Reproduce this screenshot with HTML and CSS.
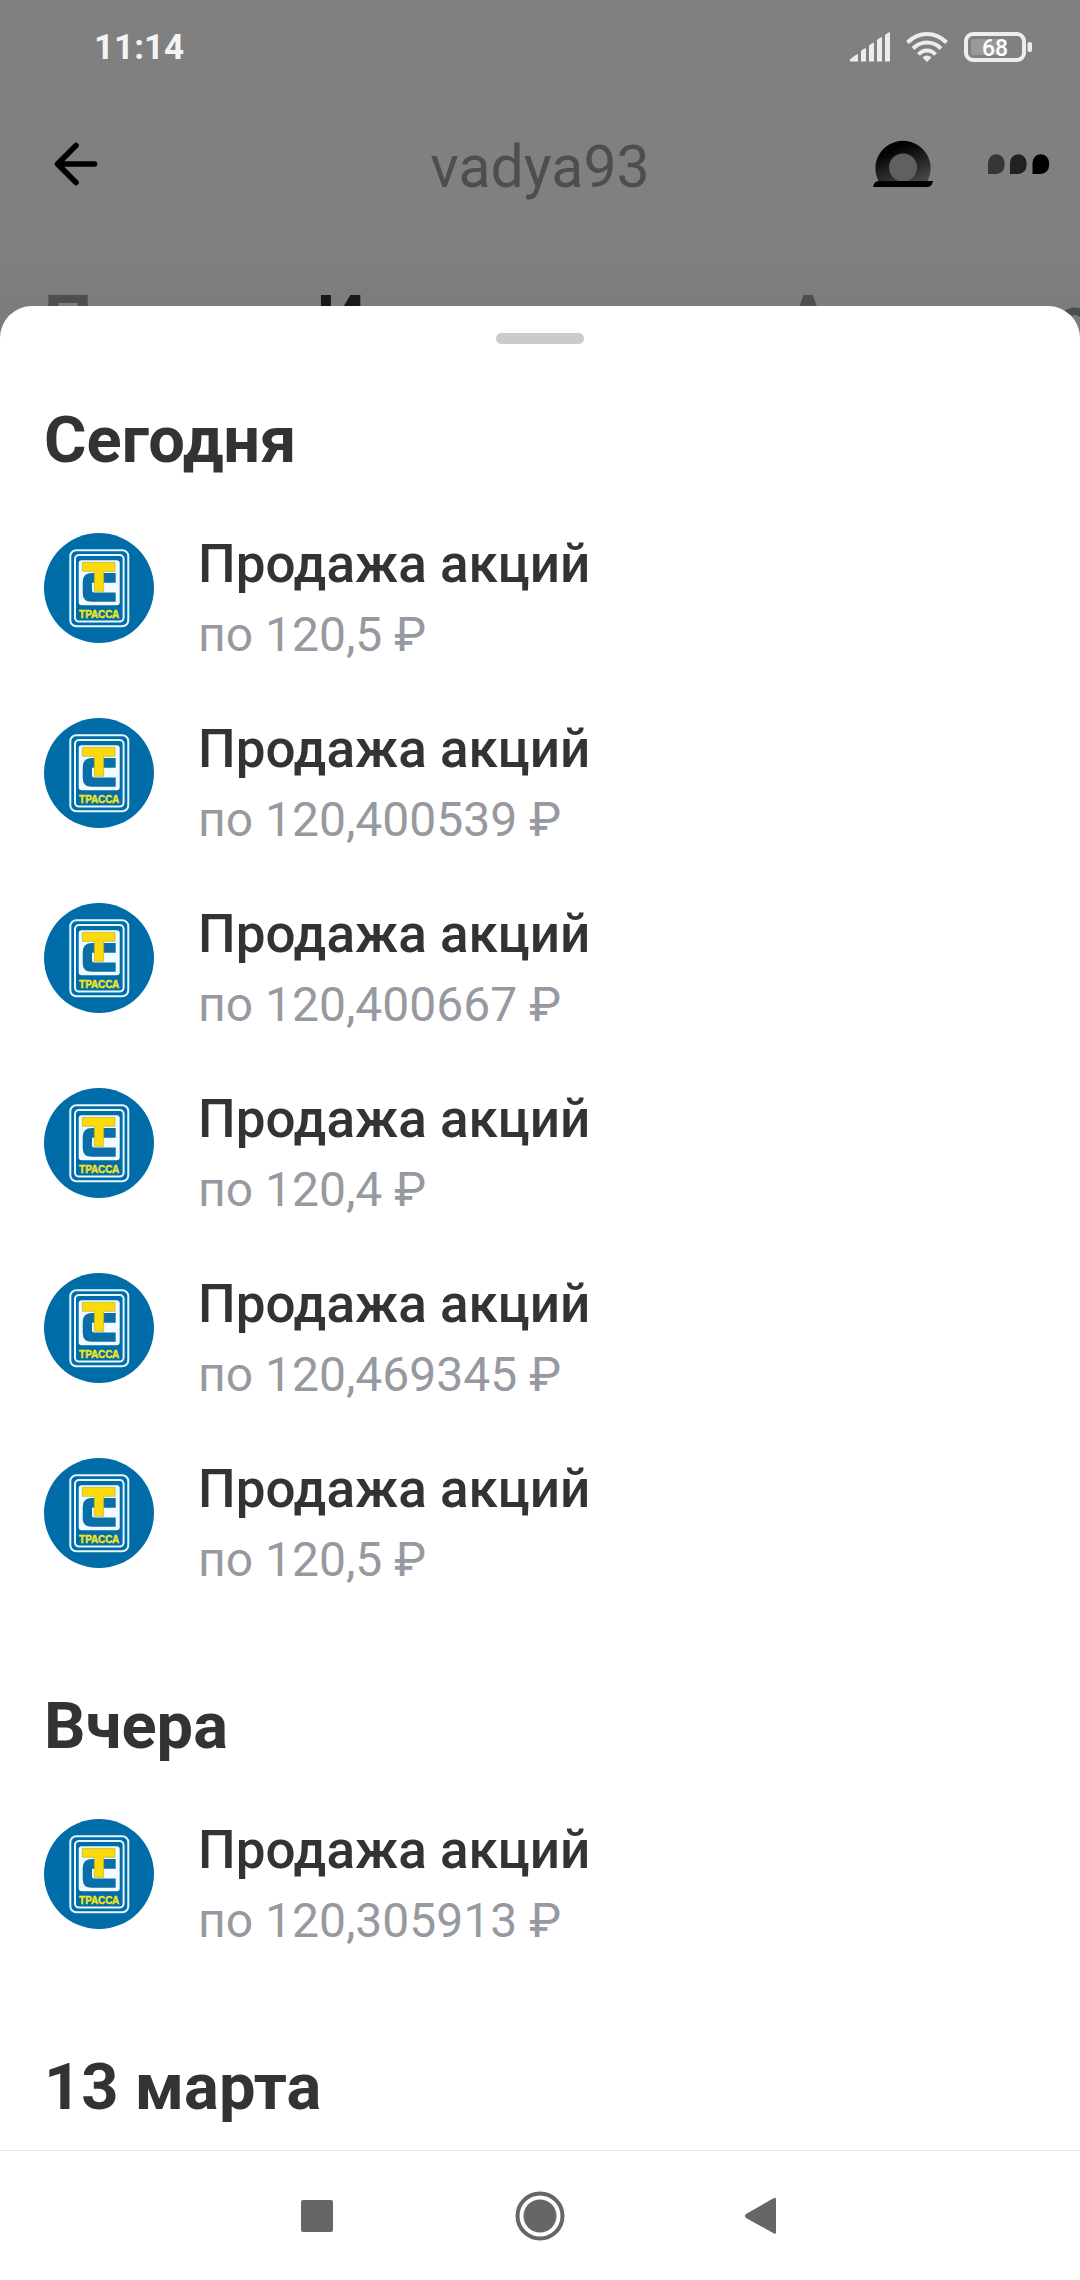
FILE: index.html
```html
<!DOCTYPE html>
<html lang="ru">
<head>
<meta charset="utf-8">
<meta name="viewport" content="width=device-width, initial-scale=1">
<title>vadya93</title>
<link rel="stylesheet" href="styles.css">
</head>
<body>
<svg class="sprite" aria-hidden="true">
  <symbol id="logo" viewBox="0 0 110 110">
    <circle cx="55" cy="55" r="55" fill="#006ca8"/>
    <rect x="26.3" y="17.3" width="58" height="76" rx="6" fill="none" stroke="#e8f7fd" stroke-width="2"/>
    <rect x="31" y="22" width="48.6" height="66.6" rx="4" fill="none" stroke="#e8f7fd" stroke-width="2"/>
    <rect x="34.7" y="27.3" width="41" height="45" rx="3" fill="#f2fbff"/>
    <path d="M71.7 40H48q-9.3 0-9.3 9v11q0 8.700 8.700 8.700h24.300v-9.200H50q-2 0-2-2v-7.800h23.700z" fill="#0a6fa8"/>
    <path d="M38.3 29.3H71v9H59.7v20h-9.400v-20h-12z" fill="#fbd90b" stroke="#a9b02a" stroke-width=".6"/>
    <text x="55.2" y="84.7" text-anchor="middle" class="logo-text">ТРАССА</text>
  </symbol>
</svg>

<div class="screen">
  <header class="top">
    <div class="status">
      <time class="clock">11:14</time>
      <div class="status-icons">
        <svg width="40" height="30" viewBox="0 0 40 30" fill="#ededed" aria-hidden="true">
          <path d="M0 29.500V27.500Q3 24 8 22v7.500zM11 29.500V19q2-2 5-3v13.500zM19 29.500V13.500q2-2 5-3v19zM27 29.500V8q2-2 5-3v24.500zM35 29.500V3q2-2 5-3v29.500z"/>
        </svg>
        <svg width="42" height="30" viewBox="0 0 42 30" fill="none" stroke="#ededed" stroke-width="4" aria-hidden="true">
          <path d="M1.500 10.500Q10 2 21 2t19.500 8.500M7 16.500Q13 10.500 21 10.500t14 6M12.500 22.500Q16 18.500 21 18.500t8.500 4"/>
          <path d="M21 30l-4.500-4.500Q21 21.500 25.500 25.500z" fill="#ededed" stroke="none"/>
        </svg>
        <svg width="68" height="30" viewBox="0 0 68 30" aria-label="68%">
          <rect x="2" y="2" width="58" height="26" rx="7" fill="none" stroke="#ededed" stroke-width="4"/>
          <rect x="7" y="7" width="33" height="16" rx="2" fill="#999"/>
          <rect x="63.500" y="10" width="4.500" height="10" rx="2" fill="#ededed"/>
          <text x="31" y="23.500" text-anchor="middle" class="battery-text">68</text>
        </svg>
      </div>
    </div>
    <div class="bar">
      <button class="icon-btn back" aria-label="Назад">
        <svg width="44" height="44" viewBox="0 0 44 44" fill="none" stroke="#000" stroke-width="5.600" stroke-linecap="round" stroke-linejoin="round"><path d="M22 3.500L3.500 22 22 40.500M4 22h36.500"/></svg>
      </button>
      <h1 class="user">vadya93</h1>
      <div class="actions">
        <button class="icon-btn" aria-label="Инкогнито">
          <svg width="60" height="48" viewBox="0 0 60 48">
            <defs><linearGradient id="hat" x1=".2" y1="0" x2=".7" y2="1"><stop offset=".2" stop-color="#000"/><stop offset="1" stop-color="#444"/></linearGradient></defs>
            <path d="M6 42A27.600 27.600 0 1 1 54 42z" fill="url(#hat)"/>
            <circle cx="30" cy="27.500" r="14" fill="#606060"/>
            <path d="M0 47q1-6 6-6h54q-1 6-6 6z" fill="#000"/>
          </svg>
        </button>
        <button class="icon-btn" aria-label="Ещё">
          <svg width="62" height="20" viewBox="0 0 62 20">
            <path d="M0 20V8.500a8.300 8.300 0 0 1 16.600 0v3a8.500 8.500 0 0 1-8.500 8.500z" fill="#363636"/>
            <path d="M22 20V8.500a8.300 8.300 0 0 1 16.600 0v3a8.500 8.500 0 0 1-8.500 8.500z" fill="#222"/>
            <path d="M44.500 20V8.500a8.300 8.300 0 0 1 16.600 0v3a8.500 8.500 0 0 1-8.500 8.500z" fill="#000"/>
          </svg>
        </button>
      </div>
    </div>
    <nav class="tabs">
      <a href="#pulse" class="tab">Пульс</a>
      <a href="#invest" class="tab active">Инвестиции</a>
      <a href="#activity" class="tab">Активность</a>
    </nav>
  </header>

  <main class="sheet">
    <div class="grabber"></div>
    <section class="day">
      <h2>Сегодня</h2>
      <ul class="deals">
        <li class="deal"><svg class="logo"><use href="#logo"/></svg><div><h3>Продажа акций</h3><p>по 120,5 ₽</p></div></li>
        <li class="deal"><svg class="logo"><use href="#logo"/></svg><div><h3>Продажа акций</h3><p>по 120,400539 ₽</p></div></li>
        <li class="deal"><svg class="logo"><use href="#logo"/></svg><div><h3>Продажа акций</h3><p>по 120,400667 ₽</p></div></li>
        <li class="deal"><svg class="logo"><use href="#logo"/></svg><div><h3>Продажа акций</h3><p>по 120,4 ₽</p></div></li>
        <li class="deal"><svg class="logo"><use href="#logo"/></svg><div><h3>Продажа акций</h3><p>по 120,469345 ₽</p></div></li>
        <li class="deal"><svg class="logo"><use href="#logo"/></svg><div><h3>Продажа акций</h3><p>по 120,5 ₽</p></div></li>
      </ul>
    </section>
    <section class="day">
      <h2>Вчера</h2>
      <ul class="deals">
        <li class="deal"><svg class="logo"><use href="#logo"/></svg><div><h3>Продажа акций</h3><p>по 120,305913 ₽</p></div></li>
      </ul>
    </section>
    <section class="day">
      <h2>13 марта</h2>
    </section>
  </main>

  <footer class="sysnav">
    <button class="icon-btn" aria-label="Недавние"><svg width="32" height="32" viewBox="0 0 32 32"><rect width="32" height="32" rx="2" fill="#666"/></svg></button>
    <button class="icon-btn" aria-label="Домой"><svg width="50" height="50" viewBox="0 0 50 50"><circle cx="25" cy="25" r="22.500" fill="none" stroke="#666" stroke-width="4"/><circle cx="25" cy="25" r="16.500" fill="#666"/></svg></button>
    <button class="icon-btn" aria-label="Назад в системе"><svg width="36" height="38" viewBox="0 0 36 38"><path d="M31 2.500v33q0 2-2 1L1 21q-2-2 0-4L29 1q2-1 2 1.500z" fill="#666"/></svg></button>
  </footer>
</div>
</body>
</html>
```
FILE: styles.css
```css
* { box-sizing: border-box; }

body {
  margin: 0;
  font-family: Roboto, "Noto Sans", sans-serif;
  color: #333;
  background: #fff;
}

h1, h2, h3, p, ul { margin: 0; padding: 0; }

.sprite { position: absolute; width: 0; height: 0; }
.logo-text {
  font: bold 10px "Liberation Sans", sans-serif;
  fill: #f4e61c;
  stroke: #f4e61c;
  stroke-width: .4;
}

.screen {
  display: flex;
  flex-direction: column;
  height: 100vh;
}

/* dimmed page behind the sheet */
.top {
  flex: none;
  background: linear-gradient(#808080 70%, #7a7a7a);
}

.status {
  display: flex;
  justify-content: space-between;
  align-items: center;
  height: 94px;
  padding: 0 48px 0 94px;
}
.clock { font-size: 35px; font-weight: 700; color: #f4f4f4; }
.status-icons { display: flex; gap: 16px; }
.status-icons svg { display: block; }
.battery-text { font: 500 23px Roboto, sans-serif; fill: #fff; }

.bar {
  display: grid;
  grid-template-columns: 1fr auto 1fr;
  align-items: center;
  height: 140px;
  padding: 0 30px;
}
.back { justify-self: start; margin-left: 24px; }
.user {
  padding-top: 6px;
  font-size: 59px;
  font-weight: 400;
  line-height: 68px;
  color: #4c4e52;
}
.actions {
  display: flex;
  justify-content: flex-end;
  align-items: center;
  gap: 55px;
}

.icon-btn {
  display: flex;
  align-items: center;
  justify-content: center;
  padding: 0;
  border: 0;
  background: none;
}
.icon-btn svg { display: block; }

.tabs {
  display: flex;
  gap: 80px;
  height: 112px;
  padding: 48px 0 0 44px;
  overflow: hidden;
  white-space: nowrap;
}
.tab {
  font-size: 68px;
  font-weight: 700;
  line-height: 78px;
  color: #4c4e52;
  text-decoration: none;
}
.tab.active { color: #181818; }

.sheet {
  position: relative;
  flex: 1;
  min-height: 0;
  margin-top: -40px;
  padding: 27px 44px 0;
  overflow: hidden;
  border-radius: 32px 32px 0 0;
  background: #fff;
}
.grabber {
  width: 88px;
  height: 11px;
  margin: 0 auto 56px;
  border-radius: 6px;
  background: #c9cbcf;
}

.day { margin-bottom: 90px; }
.day h2 { font-size: 65px; font-weight: 700; line-height: 80px; }

.deals {
  display: flex;
  flex-direction: column;
  gap: 43px;
  margin-top: 49px;
  list-style: none;
}
.deal { display: flex; gap: 44px; }
.deal h3 { font-size: 53px; font-weight: 500; line-height: 70px; }
.deal p { font-size: 48px; line-height: 72px; color: #9699a0; }
.logo { flex: none; width: 110px; height: 110px; margin-top: 4px; }

.sysnav {
  flex: none;
  display: grid;
  grid-template-columns: repeat(3, 1fr);
  height: 130px;
  padding: 0 19%;
  border-top: 1px solid #e2e2e2;
  background: #fff;
}
```
